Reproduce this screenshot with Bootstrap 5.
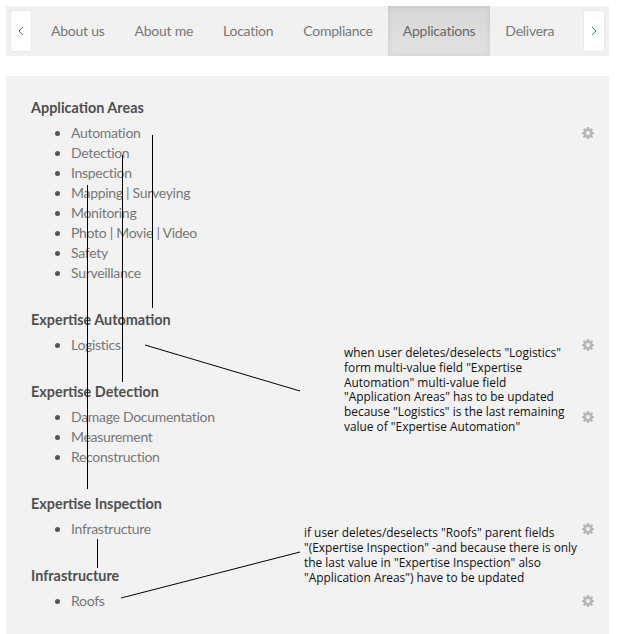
<!DOCTYPE html>
<html lang="en">
<head>
  <meta charset="UTF-8">
  <title>Applications</title>
  <link href="https://cdn.jsdelivr.net/npm/bootstrap@5.3.0/dist/css/bootstrap.min.css" rel="stylesheet">
  <style>
    body { font-family: Lato, sans-serif; font-size: 14px; color: #777; background: #fff; }
    .page-wrap { position: relative; width: 620px; height: 634px; padding: 6px 11px 0 6px; overflow: hidden; }
    .tab-bar { height: 50px; background: #f1f1f1; padding: 0 5px; }
    .tab-arrow { width: 20px; height: 40px; background: #fff; border-radius: 2px; box-shadow: 0 0 2px rgba(0,0,0,.12); }
    .tab-list { width: 548px; margin-left: 5px; flex-wrap: nowrap; overflow: hidden; }
    .tab-list .nav-link { height: 50px; padding: 0 15px; line-height: 50px; color: #777; letter-spacing: -.25px; white-space: nowrap; }
    .tab-list .nav-link.active { background: linear-gradient(#d6d6d6, #e2e2e2); box-shadow: inset 0 0 6px rgba(0,0,0,.08); color: #666; }
    .form-panel { height: 558px; margin-top: 20px; padding: 22px 15px 0 25px; background: #f2f2f2; }
    .section-title { height: 20px; margin: 0 0 5px; font-size: 14.4px; font-weight: 700; line-height: 20px; color: #4f4f4f; }
    .value-list { margin: 0 0 27px; padding-left: 40px; line-height: 20px; letter-spacing: -.3px; }
    .value-list li::marker { color: #555; }
    .gear-icon { width: 12px; height: 12px; margin-top: 4px; fill: #b8b8b8; }
    .note-lines { position: absolute; left: 0; top: 0; pointer-events: none; }
    .note-text { position: absolute; margin: 0; font-family: "Open Sans", sans-serif; font-size: 11.9px; line-height: 15px; color: #111; white-space: nowrap; }
    .note-logistics { left: 344px; top: 345px; line-height: 14.8px; }
    .note-roofs { left: 304px; top: 525px; }
  </style>
</head>
<body>
  <div class="page-wrap">
    <div class="tab-bar d-flex align-items-center justify-content-between">
      <a class="tab-arrow d-flex align-items-center justify-content-center">
        <svg width="6" height="10" viewBox="0 0 6 10"><path d="M5 1 1 5l4 4" fill="none" stroke="#3f6f8f" stroke-width="1"/></svg>
      </a>
      <ul class="nav tab-list">
        <li class="nav-item"><a class="nav-link" href="#">About us</a></li>
        <li class="nav-item"><a class="nav-link" href="#">About me</a></li>
        <li class="nav-item"><a class="nav-link" href="#">Location</a></li>
        <li class="nav-item"><a class="nav-link" href="#">Compliance</a></li>
        <li class="nav-item"><a class="nav-link active" href="#">Applications</a></li>
        <li class="nav-item"><a class="nav-link" href="#">Delivera</a></li>
      </ul>
      <a class="tab-arrow d-flex align-items-center justify-content-center">
        <svg width="6" height="10" viewBox="0 0 6 10"><path d="M1 1l4 4-4 4" fill="none" stroke="#3d7d8c" stroke-width="1"/></svg>
      </a>
    </div>

    <div class="form-panel">
      <h6 class="section-title">Application Areas</h6>
      <div class="d-flex justify-content-between">
        <ul class="value-list">
          <li>Automation</li>
          <li>Detection</li>
          <li>Inspection</li>
          <li>Mapping | Surveying</li>
          <li>Monitoring</li>
          <li>Photo | Movie | Video</li>
          <li>Safety</li>
          <li>Surveillance</li>
        </ul>
        <svg class="gear-icon" viewBox="0 0 24 24"><use href="#gear"/></svg>
      </div>

      <h6 class="section-title">Expertise Automation</h6>
      <div class="d-flex justify-content-between">
        <ul class="value-list">
          <li>Logistics</li>
        </ul>
        <svg class="gear-icon" viewBox="0 0 24 24"><use href="#gear"/></svg>
      </div>

      <h6 class="section-title">Expertise Detection</h6>
      <div class="d-flex justify-content-between">
        <ul class="value-list">
          <li>Damage Documentation</li>
          <li>Measurement</li>
          <li>Reconstruction</li>
        </ul>
        <svg class="gear-icon" viewBox="0 0 24 24"><use href="#gear"/></svg>
      </div>

      <h6 class="section-title">Expertise Inspection</h6>
      <div class="d-flex justify-content-between">
        <ul class="value-list">
          <li>Infrastructure</li>
        </ul>
        <svg class="gear-icon" viewBox="0 0 24 24"><use href="#gear"/></svg>
      </div>

      <h6 class="section-title">Infrastructure</h6>
      <div class="d-flex justify-content-between">
        <ul class="value-list">
          <li>Roofs</li>
        </ul>
        <svg class="gear-icon" viewBox="0 0 24 24"><use href="#gear"/></svg>
      </div>
    </div>

    <!-- hand drawn annotations on top of the form -->
    <svg class="note-lines" width="620" height="634" viewBox="0 0 620 634">
      <defs>
        <path id="gear" fill-rule="evenodd" d="M10 0h4l.7 3.2 2 .8L19.500 2.300l2.800 2.800L20 8l.8 2 3.200.700v3.600L20.800 15l-.8 2 2.300 2.800-2.800 2.800L16.800 20l-2 .8L14 24h-4l-.8-3.200-2-.8-2.700 2.300-2.800-2.800L4 17l-.8-2L0 14.300v-3.600L3.200 10 4 8 1.700 5.100l2.800-2.800L7.200 4l2-.8zM12 8a4 4 0 1 0 0 8 4 4 0 0 0 0-8z"/>
      </defs>
      <g stroke="#000" stroke-width="1" fill="none">
        <line x1="152.500" y1="135" x2="152.500" y2="308"/>
        <line x1="122.500" y1="155" x2="122.500" y2="382"/>
        <line x1="87.500" y1="185" x2="87.500" y2="489"/>
        <line x1="97.500" y1="539" x2="97.500" y2="568"/>
        <line x1="145" y1="345" x2="300" y2="391"/>
        <line x1="121" y1="598" x2="300" y2="552"/>
      </g>
    </svg>
    <p class="note-text note-logistics">when user deletes/deselects "Logistics"<br>form multi-value field "Expertise<br>Automation" multi-value field<br>"Application Areas" has to be updated<br>because "Logistics" is the last remaining<br>value of "Expertise Automation"</p>
    <p class="note-text note-roofs">if user deletes/deselects "Roofs" parent fields<br>"(Expertise Inspection" -and because there is only<br>the last value in "Expertise Inspection" also<br>"Application Areas") have to be updated</p>
  </div>
  <script src="https://cdn.jsdelivr.net/npm/bootstrap@5.3.0/dist/js/bootstrap.bundle.min.js"></script>
</body>
</html>
